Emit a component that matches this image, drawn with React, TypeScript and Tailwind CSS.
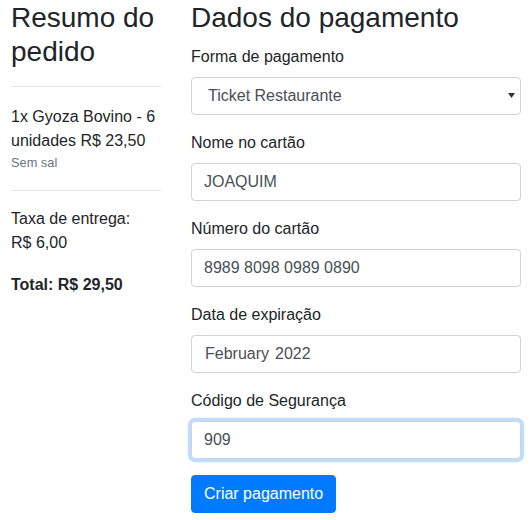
import { useState } from "react";

const inputBase =
  "block w-full h-[38px] border border-[#ced4da] rounded-[4px] bg-white px-3 py-[6px] text-base leading-6 text-[#495057] outline-none";

function Campo({
  label,
  children,
}: {
  label: string;
  children: React.ReactNode;
}) {
  return (
    <div className="mb-4">
      <label className="block mb-2 text-base leading-6">{label}</label>
      {children}
    </div>
  );
}

export default function App() {
  const [nome, setNome] = useState("JOAQUIM");
  const [numero, setNumero] = useState("8989 8098 0989 0890");
  const [codigo, setCodigo] = useState("909");

  return (
    <div
      className="min-h-[520px] bg-white text-[#212529] pl-[11px]"
      style={{ fontFamily: '"Liberation Sans", Arial, sans-serif' }}
    >
      <div className="flex">
        {/* Resumo */}
        <div className="w-[150px] shrink-0">
          <h3 className="mt-px text-[28px] leading-[1.2] font-normal">Resumo do pedido</h3>
          <hr className="mt-[18px] mb-[18px] border-0 border-t border-[#e5e5e5]" />
          <div className="text-base leading-6">1x Gyoza Bovino - 6 unidades R$ 23,50</div>
          <div className="text-[12.8px] leading-[1.5] text-[#6c757d]">Sem sal</div>
          <hr className="mt-[18px] mb-4 border-0 border-t border-[#e5e5e5]" />
          <div className="text-base leading-6">
            Taxa de entrega:
            <br />
            R$ 6,00
          </div>
          <div className="mt-[18px] text-base leading-6 font-bold">Total: R$ 29,50</div>
        </div>

        {/* Pagamento */}
        <div className="w-[330px] shrink-0 ml-[30px]">
          <h3 className="mt-px mb-[10px] text-[28px] leading-[1.2] font-normal">Dados do pagamento</h3>

          <Campo label="Forma de pagamento">
            <div className={`${inputBase} relative pl-[16px]`}>
              Ticket Restaurante
              <svg
                className="absolute right-[5px] top-[15px]"
                width="7"
                height="5"
                viewBox="0 0 7 5"
              >
                <path d="M0 0h7L3.5 5z" fill="#333" />
              </svg>
            </div>
          </Campo>

          <Campo label="Nome no cartão">
            <input className={inputBase} value={nome} onChange={(e) => setNome(e.target.value)} />
          </Campo>

          <Campo label="Número do cartão">
            <input className={inputBase} value={numero} onChange={(e) => setNumero(e.target.value)} />
          </Campo>

          <Campo label="Data de expiração">
            <div className={`${inputBase} pl-[13px]`}>
              February<span className="ml-[6px]">2022</span>
            </div>
          </Campo>

          <Campo label="Código de Segurança">
            <input
              className={`${inputBase} border-[#80bdff] shadow-[0_0_0_3.2px_rgba(0,123,255,0.25)]`}
              value={codigo}
              onChange={(e) => setCodigo(e.target.value)}
            />
          </Campo>

          <button className="h-[38px] bg-[#007bff] border border-[#007bff] text-white rounded-[4px] px-3 py-[6px] text-base leading-6">
            Criar pagamento
          </button>
        </div>
      </div>
    </div>
  );
}
